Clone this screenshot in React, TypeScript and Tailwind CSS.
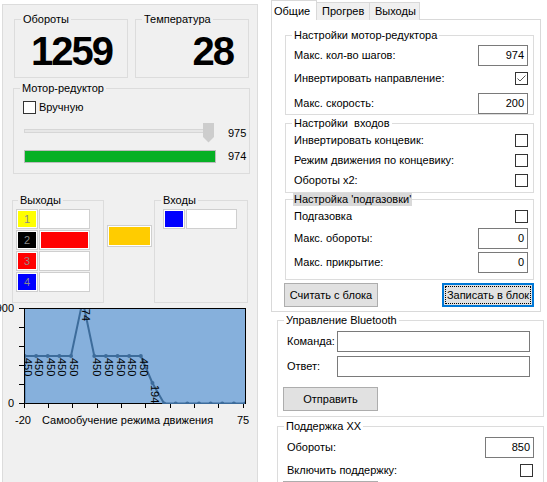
import type { ReactNode } from 'react';

// motor learn curve: one sample every 5 units from -20 to 75
const learnValues = [450, 450, 450, 450, 450, 974, 450, 450, 450, 450, 450, 194, 0, 0, 0, 0, 0, 0, 0, 0];
const learnPoints = learnValues.map((v, i) => ({
  x: 24.5 + (i * 5 * 221) / 95,
  y: 403.5 - (v * 95) / 900,
  v,
}));

const yTicks = [308.5, 327.5, 346.5, 365.5, 384.5, 403.5];
const xTicks = [24.5, 48.5, 72.5, 97.5, 121.5, 145.5, 170.5, 194.5, 218.5, 243.5];

const outputs = [
  { n: '1', color: 'bg-[#ffff00]', on: false },
  { n: '2', color: 'bg-black', on: true },
  { n: '3', color: 'bg-[#ff0000]', on: false },
  { n: '4', color: 'bg-[#0000ff]', on: false },
];

function GroupBox({
  title,
  className = '',
  legendClass = 'ml-[6px] px-[2px]',
  children,
}: {
  title: string;
  className?: string;
  legendClass?: string;
  children?: ReactNode;
}) {
  return (
    <fieldset className={`min-w-0 border border-[#dcdcdc] ${className}`}>
      <legend className={`whitespace-pre leading-[13px] ${legendClass}`}>{title}</legend>
      {children}
    </fieldset>
  );
}

function CheckBox({ checked = false }: { checked?: boolean }) {
  return (
    <span className="flex h-[13px] w-[13px] shrink-0 items-center justify-center border border-[#333333] bg-white">
      {checked && (
        <svg width="11" height="11" viewBox="0 0 11 11" fill="none" stroke="#555" strokeWidth="1">
          <path d="M1.5 5.5 L4 8 L9.5 2.5" />
        </svg>
      )}
    </span>
  );
}

function TextBox({ value = '', className = '' }: { value?: string; className?: string }) {
  return (
    <div className={`flex shrink-0 items-center justify-end border border-[#7a7a7a] bg-white pr-[3px] ${className}`}>
      {value}
    </div>
  );
}

// colour cell: grey frame, 1px white inset, then the fill
function Swatch({ className = '', children }: { className?: string; children?: ReactNode }) {
  return (
    <div className="h-full w-full border border-[#cfcfcf] bg-white p-px">
      <div className={`flex h-full w-full items-center justify-center text-[#8a8a8a] ${className}`}>{children}</div>
    </div>
  );
}

function LearnChart() {
  const line = `M24.5 403.5 ` + learnPoints.map((p) => `L${p.x.toFixed(1)} ${p.y.toFixed(1)}`).join(' ');
  return (
    <svg width="257" height="127" viewBox="0 303 257 127" className="-ml-[3px] block overflow-visible">
      <defs>
        <clipPath id="plot">
          <rect x="25" y="309" width="220" height="95" />
        </clipPath>
      </defs>
      <rect x="24.5" y="308.5" width="221" height="95" fill="#86b0dc" stroke="#000" strokeWidth="1" />
      {yTicks.map((t) => (
        <line key={t} x1="19" x2="24" y1={t} y2={t} stroke="#000" />
      ))}
      {xTicks.map((t) => (
        <line key={t} x1={t} x2={t} y1="403" y2="408" stroke="#000" />
      ))}
      <g clipPath="url(#plot)">
        <path d={line} fill="none" stroke="#3d6c9b" strokeWidth="2" strokeLinejoin="round" />
        {learnPoints.map((p, i) => (
          <circle key={i} cx={p.x} cy={p.y} r="2" fill="#3d6c9b" />
        ))}
        {learnPoints
          .filter((p) => p.v > 0)
          .map((p, i) => (
            <text
              key={i}
              transform={`translate(${(p.x - 1).toFixed(1)} ${(p.y + 2).toFixed(1)}) rotate(90)`}
              fontSize="11"
              fill="#000"
            >
              {p.v}
            </text>
          ))}
      </g>
      <g fontSize="11" fill="#000">
        <text x="14" y="312" textAnchor="end">900</text>
        <text x="14" y="407" textAnchor="end">0</text>
        <text x="15" y="424">-20</text>
        <text x="42" y="424">Самообучение режима движения</text>
        <text x="237" y="424">75</text>
      </g>
    </svg>
  );
}

function LeftPanel() {
  return (
    <div className="ml-[2px] mt-[4px] h-[480px] w-[256px] shrink-0 border border-[#dcdcdc] bg-[#f0f0f0]">
      {/* counters */}
      <div className="mt-[8px] flex">
        <GroupBox title="Обороты" className="ml-[11px] h-[65px] w-[114px]">
          <div className="mt-[5px] pr-[15px] text-right text-[40px] font-bold leading-none tracking-[-2px]">1259</div>
        </GroupBox>
        <GroupBox title="Температура" className="ml-[7px] h-[65px] w-[114px]">
          <div className="mt-[5px] pr-[15px] text-right text-[40px] font-bold leading-none tracking-[-2px]">28</div>
        </GroupBox>
      </div>

      {/* motor */}
      <GroupBox title="Мотор-редуктор" className="ml-[10px] mt-[4px] w-[237px] pb-[10px]">
        <div className="ml-[9px] mt-[6px] flex h-[13px] items-center gap-[3px]">
          <CheckBox />
          <span>Вручную</span>
        </div>
        <div className="ml-[10px] mt-[9px] flex h-[20px] items-center">
          <div className="relative h-[20px] w-[190px]">
            <div className="absolute left-0 right-0 top-[6px] h-[4px] border border-[#d6d6d6] bg-[#e7e7e7]" />
            <svg width="11" height="20" viewBox="0 0 11 20" className="absolute right-0 top-0">
              <path d="M0 0 H11 V14 L5.5 19.5 L0 14 Z" fill="#cdcdcd" />
            </svg>
          </div>
          <span className="ml-[14px]">975</span>
        </div>
        <div className="ml-[10px] mt-[7px] flex h-[13px] items-center">
          <div className="h-[13px] w-[192px] border border-[#bcbcbc] bg-[#e6e6e6]">
            <div className="h-full w-full bg-[#06b025]" />
          </div>
          <span className="ml-[12px]">974</span>
        </div>
      </GroupBox>

      {/* outputs / inputs */}
      <div className="mt-[20px] flex items-start">
        <GroupBox title="Выходы" className="ml-[9px] h-[109px] w-[92px]" legendClass="ml-[5px] px-[2px]">
          <div className="ml-[3px] mt-[2px] flex flex-col gap-px">
            {outputs.map((o) => (
              <div key={o.n} className="flex h-[20px] gap-px">
                <div className="h-[20px] w-[22px]">
                  <Swatch className={o.color}>{o.n}</Swatch>
                </div>
                <div className="h-[20px] w-[51px]">
                  <Swatch className={o.on ? 'bg-[#ff0000]' : 'bg-white'} />
                </div>
              </div>
            ))}
          </div>
        </GroupBox>
        <div className="ml-[3px] mt-[31px] h-[22px] w-[45px]">
          <Swatch className="bg-[#ffcc00]" />
        </div>
        <GroupBox title="Входы" className="ml-[2px] h-[109px] w-[94px]">
          <div className="ml-[8px] mt-[2px] flex h-[20px] gap-px">
            <div className="h-[20px] w-[22px]">
              <Swatch className="bg-[#0000ff]" />
            </div>
            <div className="h-[20px] w-[51px]">
              <Swatch className="bg-white" />
            </div>
          </div>
        </GroupBox>
      </div>

      <LearnChart />
    </div>
  );
}

function Row({ label, children, className = '' }: { label: string; children: ReactNode; className?: string }) {
  return (
    <div className={`flex items-center justify-between pl-[8px] pr-[5px] ${className}`}>
      <span className="whitespace-pre">{label}</span>
      {children}
    </div>
  );
}

function RightPanel() {
  return (
    <div className="ml-[13px] w-[276px] shrink-0">
      {/* tab strip */}
      <div className="flex h-[20px] items-end">
        <div className="relative z-10 flex h-[20px] w-[46px] items-start border-l border-r border-t border-[#d9d9d9] bg-white pl-[2px] pt-[2px]">
          Общие
        </div>
        <div className="flex h-[18px] w-[53px] items-center border-r border-t border-[#d9d9d9] bg-[#f0f0f0] pl-[5px]">
          Прогрев
        </div>
        <div className="flex h-[18px] w-[50px] items-center border-r border-t border-[#d9d9d9] bg-[#f0f0f0] pl-[5px]">
          Выходы
        </div>
      </div>

      {/* "Общие" page */}
      <div className="-mt-px h-[293px] w-[270px] border border-[#d9d9d9] bg-white">
        <GroupBox title="Настройки мотор-редуктора" className="ml-[13px] mt-[9px] w-[249px]">
          <Row label="Макс. кол-во шагов:" className="mt-[3px] h-[21px]">
            <TextBox value="974" className="h-[21px] w-[50px]" />
          </Row>
          <Row label="Инвертировать направление:" className="mt-[2px] h-[21px]">
            <CheckBox checked />
          </Row>
          <Row label="Макс. скорость:" className="mt-[4px] h-[21px]">
            <TextBox value="200" className="h-[21px] w-[50px]" />
          </Row>
        </GroupBox>

        <GroupBox title="Настройки  входов" className="ml-[13px] mt-[2px] w-[249px] pb-[2px]">
          <Row label="Инвертировать концевик:" className="h-[20px]">
            <CheckBox />
          </Row>
          <Row label="Режим движения по концевику:" className="h-[20px]">
            <CheckBox />
          </Row>
          <Row label="Обороты x2:" className="h-[20px]">
            <CheckBox />
          </Row>
        </GroupBox>

        <GroupBox
          title="Настройка 'подгазовки'"
          className="ml-[13px] w-[249px] pb-[6px]"
          legendClass="ml-[7px] bg-[#d9d9d9] px-px"
        >
          <Row label="Подгазовка" className="h-[20px]">
            <CheckBox />
          </Row>
          <Row label="Макс. обороты:" className="mt-[2px] h-[21px]">
            <TextBox value="0" className="h-[21px] w-[50px]" />
          </Row>
          <Row label="Макс. прикрытие:" className="mt-[3px] h-[21px]">
            <TextBox value="0" className="h-[21px] w-[50px]" />
          </Row>
        </GroupBox>

        <div className="ml-[12px] mt-[3px] flex w-[250px] justify-between">
          <div className="flex h-[24px] w-[94px] items-center justify-center border border-[#adadad] bg-[#e1e1e1]">
            Считать с блока
          </div>
          <div className="h-[24px] w-[92px] border-2 border-[#0078d7] bg-[#e1e1e1] p-px">
            <div className="flex h-full w-full items-center justify-center whitespace-nowrap border border-dotted border-black">
              Записать в блок
            </div>
          </div>
        </div>
      </div>

      {/* bluetooth console */}
      <GroupBox title="Управление Bluetooth" className="ml-[6px] mt-[2px] w-[267px] pb-[5px]">
        <div className="mt-[4px] flex h-[21px] items-center pl-[9px]">
          <span className="w-[50px]">Команда:</span>
          <TextBox className="h-[21px] w-[193px]" />
        </div>
        <div className="mt-[4px] flex h-[21px] items-center pl-[9px]">
          <span className="w-[50px]">Ответ:</span>
          <TextBox className="h-[21px] w-[193px]" />
        </div>
        <div className="ml-[5px] mt-[10px] flex h-[24px] w-[95px] items-center justify-center border border-[#adadad] bg-[#e1e1e1]">
          Отправить
        </div>
      </GroupBox>

      {/* idle support */}
      <GroupBox title="Поддержка ХХ" className="ml-[6px] mt-[3px] w-[267px]">
        <div className="mt-[4px] flex h-[21px] items-center justify-between pl-[9px] pr-[9px]">
          <span>Обороты:</span>
          <TextBox value="850" className="h-[21px] w-[49px]" />
        </div>
        <div className="mt-[2px] flex h-[20px] items-center justify-between pl-[9px] pr-[10px]">
          <span>Включить поддержку:</span>
          <CheckBox />
        </div>
        <div className="ml-[5px] mt-px h-[24px] w-[95px] border border-[#adadad] bg-[#e1e1e1]" />
      </GroupBox>
    </div>
  );
}

export default function App() {
  return (
    <div className="h-[482px] w-[547px] overflow-hidden bg-white font-['Liberation_Sans',Arial,sans-serif] text-[11px] text-black">
      <div className="flex items-start">
        <LeftPanel />
        <RightPanel />
      </div>
    </div>
  );
}
